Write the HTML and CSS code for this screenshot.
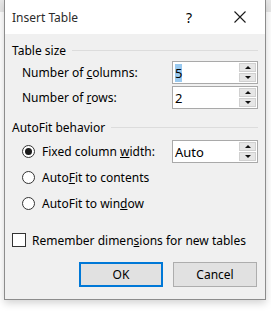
FILE: index.html
```html
<!DOCTYPE html>
<html lang="en">
<head>
    <meta charset="UTF-8">
    <link rel="stylesheet" href="styles.css">
    <title>Insert Table</title>
</head>
<body>
    <div class="dialog">
        <div class="titlebar">
            <span class="title">Insert Table</span>
            <span class="help">?</span>
            <svg class="close" width="12" height="12" viewBox="0 0 12 12">
                <path d="M0.5 0.5 L11.5 11.5 M11.5 0.5 L0.5 11.5" stroke="#1a1a1a" stroke-width="1.1" fill="none"/>
            </svg>
        </div>

        <div class="body">
            <div class="group-head"><span>Table size</span><div class="rule"></div></div>

            <div class="row">
                <label class="label"><span>Number of <u>c</u>olumns:</span></label>
                <div class="spin">
                    <span class="value"><span class="sel">5</span></span>
                    <div class="arrows">
                        <div class="arrow up"></div>
                        <div class="arrow down"></div>
                    </div>
                </div>
            </div>
            <div class="row">
                <label class="label"><span>Number of <u>r</u>ows:</span></label>
                <div class="spin">
                    <span class="value">2</span>
                    <div class="arrows">
                        <div class="arrow up"></div>
                        <div class="arrow down"></div>
                    </div>
                </div>
            </div>

            <div class="group-head second"><span>AutoFit behavior</span><div class="rule"></div></div>

            <div class="row first-opt">
                <label class="option"><span class="radio checked"></span><span>Fixed column <u>w</u>idth:</span></label>
                <div class="spin">
                    <span class="value">Auto</span>
                    <div class="arrows">
                        <div class="arrow up"></div>
                        <div class="arrow down"></div>
                    </div>
                </div>
            </div>
            <div class="row opt">
                <label class="option"><span class="radio"></span><span>Auto<u>F</u>it to contents</span></label>
            </div>
            <div class="row opt">
                <label class="option"><span class="radio"></span><span>AutoFit to win<u>d</u>ow</span></label>
            </div>

            <div class="remember">
                <span class="check"></span><span>Remember dimen<u>s</u>ions for new tables</span>
            </div>

            <div class="buttons">
                <button class="btn default">OK</button>
                <button class="btn">Cancel</button>
            </div>
        </div>
    </div>
</body>
</html>
```

FILE: styles.css
```css
html, body {
    margin: 0;
    padding: 0;
}

body {
    width: 271px;
    height: 312px;
    overflow: hidden;
    background: linear-gradient(#e8e8e8, #e8e8e8) top left / 100% 12px no-repeat, #fff;
    font-family: "Noto Sans", "Open Sans", sans-serif;
    font-size: 12px;
    color: #000;
}

.dialog {
    margin-left: 4px;
    width: 260px;
    height: 299px;
    border: 1px solid #8c8c8c;
    border-top: none;
    background: #f0f0f0;
    box-shadow: 0 3px 8px rgba(0, 0, 0, 0.18);
}

.titlebar {
    height: 34px;
    background: #fff;
    display: flex;
    align-items: center;
    padding-left: 7px;
}

.title {
    color: #2b2b2b;
    flex: 1;
}

.help {
    font-size: 14px;
    margin-right: 42px;
}

.close {
    margin-right: 19px;
}

.body {
    padding: 6px 7px 0 7px;
}

.group-head {
    height: 20px;
    display: flex;
    align-items: center;
}

.group-head.second {
    margin-top: 7px;
}

.rule {
    flex: 1;
    height: 1px;
    background: #dcdcdc;
    margin-left: 6px;
}

.row {
    height: 25px;
    display: flex;
    align-items: center;
    justify-content: space-between;
    padding-left: 10px;
}

.row.first-opt {
    margin-top: 2px;
}

.row.opt {
    height: 26px;
}

.spin {
    width: 84px;
    height: 21px;
    border: 1px solid #a9a9a9;
    background: #fff;
    display: flex;
    align-items: center;
}

.value {
    flex: 1;
    padding-left: 2px;
    font-size: 13px;
}

.sel {
    background: #99c9ef;
}

.arrows {
    width: 17px;
    height: 19px;
    display: flex;
    flex-direction: column;
    gap: 1px;
    margin-right: 1px;
}

.arrow {
    flex: 1;
    background: #e6e6e6;
    border: 1px solid #d0d0d0;
    display: flex;
    align-items: center;
    justify-content: center;
}

.arrow::before {
    content: "";
    border-left: 3px solid transparent;
    border-right: 3px solid transparent;
}

.arrow.up::before {
    border-bottom: 3px solid #111;
}

.arrow.down::before {
    border-top: 3px solid #111;
}

.option {
    display: flex;
    align-items: center;
}

.radio {
    width: 11px;
    height: 11px;
    border: 1px solid #333;
    border-radius: 50%;
    background: #fff;
    margin-right: 7px;
    display: flex;
    align-items: center;
    justify-content: center;
}

.radio.checked::before {
    content: "";
    width: 7px;
    height: 7px;
    border-radius: 50%;
    background: #1a1a1a;
}

.remember {
    margin-top: 14px;
    height: 20px;
    display: flex;
    align-items: center;
}

.check {
    width: 12px;
    height: 12px;
    border: 1px solid #333;
    background: #fff;
    margin-right: 6px;
}

.buttons {
    margin-top: 12px;
    display: flex;
    justify-content: flex-end;
    gap: 10px;
    padding-right: 1px;
}

.btn {
    width: 84px;
    height: 25px;
    font-family: inherit;
    font-size: 12px;
    background: #e1e1e1;
    border: 1px solid #adadad;
    padding: 0;
    color: #000;
}

.btn.default {
    border: 2px solid #0078d7;
}
```
